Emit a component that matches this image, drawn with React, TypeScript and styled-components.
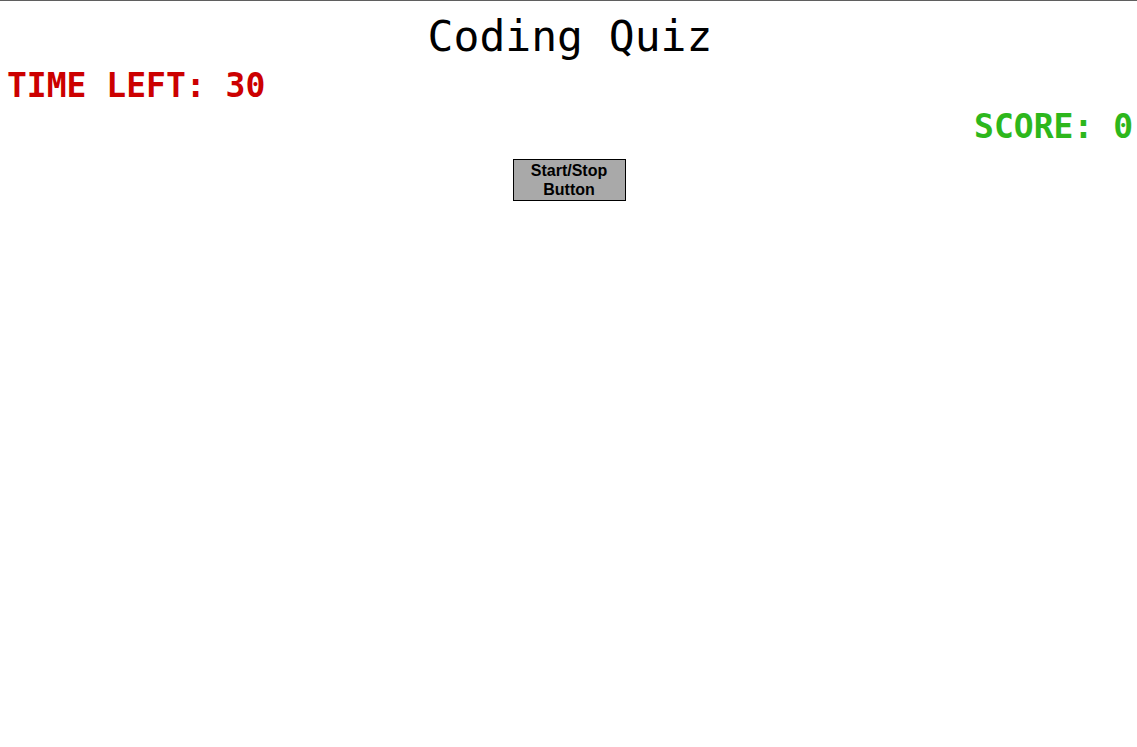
import React from 'react'
import styled, { createGlobalStyle } from 'styled-components'

const GlobalStyle = createGlobalStyle`
	html, body {
		margin: 0;
		padding: 0;
		background: #fff;
	}
	body {
		border-top: 1px solid #5f5f5f;
		font-family: "DejaVu Sans Mono", monospace;
	}
`

const Page = styled.main`
	display: flex;
	flex-direction: column;
	padding: 0 4px 0 7px;
`

const Title = styled.h1`
	margin: 10px 0 0;
	font-size: 43px;
	font-weight: normal;
	line-height: 51px;
	text-align: center;
	color: #000;
`

const Stat = styled.div<{ $color: string; $align: 'left' | 'right' }>`
	font-size: 33px;
	font-weight: bold;
	line-height: 39px;
	color: ${p => p.$color};
	text-align: ${p => p.$align};
`

const Timer = styled(Stat)`
	margin-top: 4px;
`

const Score = styled(Stat)`
	margin-top: 2px;
`

const Controls = styled.div`
	display: flex;
	justify-content: center;
	margin: 13px 2px 0 0;
`

const StartButton = styled.button`
	width: 113px;
	height: 42px;
	padding: 0 8px;
	background: #a9a9a9;
	border: 1px solid #000;
	border-radius: 0;
	font-family: "Liberation Sans", Arial, sans-serif;
	font-size: 16px;
	font-weight: bold;
	line-height: 19px;
	color: #000;
	cursor: pointer;
`

export default function App() {
	const [timeLeft] = React.useState(30)
	const [score] = React.useState(0)

	return (
		<>
			<GlobalStyle />
			<Page>
				<Title>Coding Quiz</Title>
				<Timer $color="#cc0000" $align="left">TIME LEFT: { timeLeft }</Timer>
				<Score $color="#2db71c" $align="right">SCORE: { score }</Score>
				<Controls>
					<StartButton>Start/Stop Button</StartButton>
				</Controls>
			</Page>
		</>
	)
}
